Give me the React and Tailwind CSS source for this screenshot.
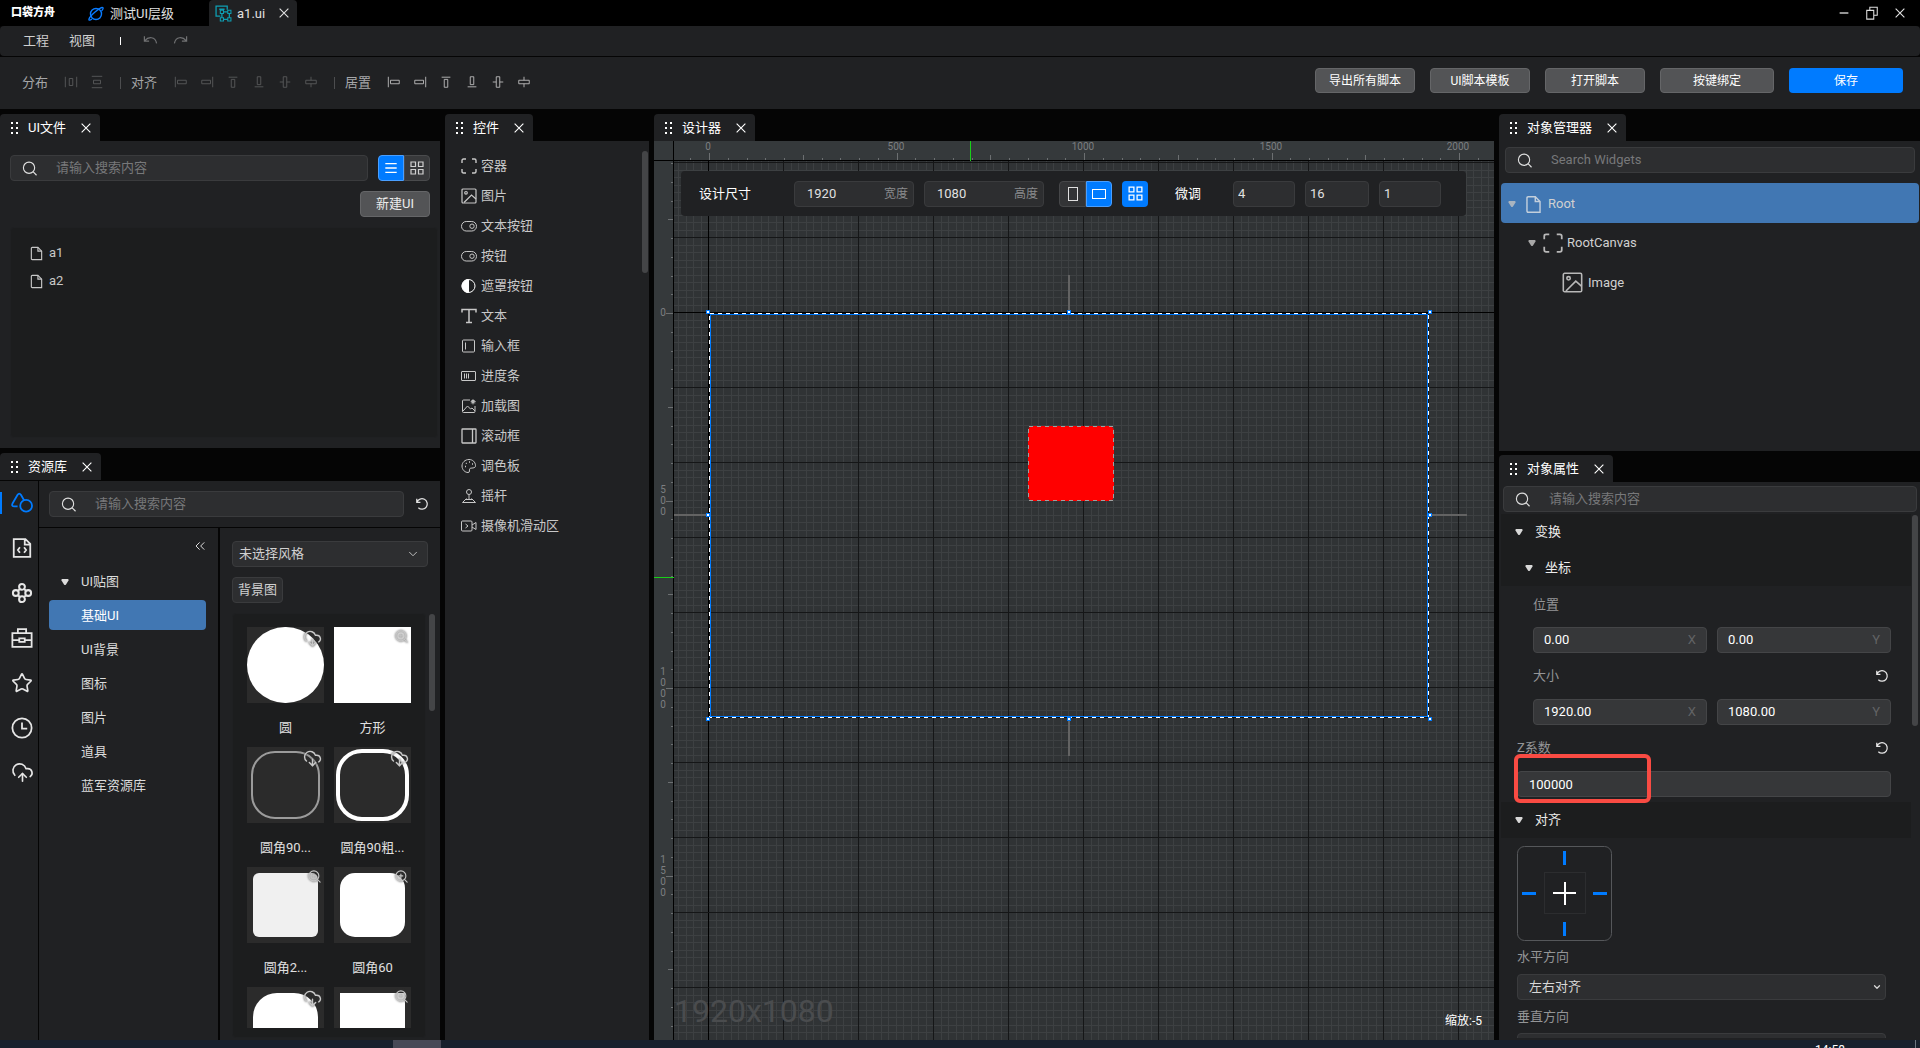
import { ChevronDown, ChevronsLeft, CloudDownload, CloudUpload, Star, ZoomIn } from "lucide-react"

const INPUT = "bg-[#2d2e30] border border-[#3a3b3d] rounded-sm outline-none"

const Svg = ({ size = 16, className = "", children }) => (
  <svg
    width={size}
    height={size}
    viewBox="0 0 16 16"
    fill="none"
    stroke="currentColor"
    strokeWidth="1"
    className={`shrink-0 ${className}`}
    aria-hidden="true"
  >
    {children}
  </svg>
)

const icons = {
  container: <path d="M1 5V2.5Q1 1 2.5 1H5M11 1h2.5Q15 1 15 2.5V5M15 11v2.5q0 1.5-1.5 1.5H11M5 15H2.5Q1 15 1 13.500V11" strokeWidth="1.4" />,
  image: (
    <g strokeWidth="1.2">
      <rect x="1" y="1" width="14" height="14" rx="1" />
      <circle cx="5" cy="4.800" r="1.300" />
      <path d="M3 14.500l7.500-7.500 4.500 4" />
    </g>
  ),
  toggle: (
    <>
      <rect x="0.500" y="3.500" width="15" height="9.500" rx="4.700" />
      <circle cx="11" cy="8.200" r="2.200" />
    </>
  ),
  mask: (
    <>
      <circle cx="7.500" cy="8" r="6.500" />
      <path d="M7.500 1.500a6.500 6.500 0 000 13z" fill="currentColor" />
    </>
  ),
  text: <path d="M1 4.500V1.500h14v3M8 1.500v13M5 14.500h6" strokeWidth="1.500" />,
  input: (
    <>
      <rect x="1.500" y="2" width="12" height="12" rx="1" />
      <path d="M4.500 4.500v7" />
    </>
  ),
  progress: (
    <>
      <rect x="0.500" y="3.500" width="14" height="9" rx="0.500" />
      <path d="M3.500 5.500v5M5.500 5.500v5M7.500 5.500v5" />
    </>
  ),
  loadImage: (
    <>
      <path d="M9 2H2.500Q1.500 2 1.500 3v10.500q0 1 1 1h10.500q1 0 1-1V8" />
      <path d="M2 13l4.500-5 3 3 1.500-1 3 3" />
      <path d="M12 1v5.500M9.500 3.700h5.500M10.300 2l3.500 3.500M13.800 2l-3.500 3.500" strokeWidth="0.700" />
      <circle cx="12" cy="3.700" r="1.300" />
    </>
  ),
  scroll: (
    <g strokeWidth="1.300">
      <rect x="1" y="1" width="14" height="14" rx="0.500" />
      <path d="M11.500 1v14" />
    </g>
  ),
  palette: (
    <>
      <path d="M8 1.500C4 1.500 1 4.500 1 8c0 3.800 3 6.500 6 6.500 2.500 0 .8-2.500 1.800-3.800s5.700.3 5.700-3C14.500 4 11.500 1.500 8 1.500z" />
      <path d="M4 8.500h1M4.800 5.300h1M8 4h1M11 6h1" strokeWidth="1.300" />
    </>
  ),
  stick: (
    <>
      <circle cx="8" cy="4" r="2.500" />
      <path d="M8 6.500v5M5.500 10.500l-4 4h13l-4-4M5 11.500h6" />
    </>
  ),
  camera: (
    <>
      <rect x="0.500" y="3" width="10.500" height="10" rx="1" />
      <path d="M11 7l4-2.500v7L11 9M4.500 6l2.500 2-2.500 2" />
    </>
  ),
  file: (
    <g strokeWidth="1.200">
      <path d="M3.500 1.500h6l4 4v9h-10q-1 0-1-1v-11q0-1 1-1z" />
      <path d="M9.500 1.500v4h4" />
    </g>
  ),
  distH: <path d="M1.500 2v12M14.500 2v12M6 4h4v8H6z" />,
  distV: <path d="M2 1.500h12M2 14.500h12M4 6h8v4H4z" />,
  left: <path d="M1.500 2v12M4 6h10v4H4z" />,
  right: <path d="M14.500 2v12M2 6h10v4H2z" />,
  top: <path d="M3 2.500h10M6 5h4v9H6z" />,
  bottom: <path d="M3 13.500h10M6 2h4v9H6z" />,
  centerH: <path d="M6 2h4v12H6zM2 8h4M10 8h4" />,
  centerV: <path d="M2 6h12v4H2zM8 2v4M8 10v4" />,
  undo: <path d="M1.500 2.500v5h5M2 7q3-3.500 7-3 4.500.500 5.500 6" strokeWidth="1.300" />,
  redo: <path d="M14.500 2.500v5h-5M14 7q-3-3.500-7-3-4.500.500-5.500 6" strokeWidth="1.300" />,
  reset: <path d="M2 2v4.200h4.200M2.300 6a6 6 0 1 1 1.500 6.300" strokeWidth="1.400" />,
  search: (
    <g strokeWidth="1.200">
      <circle cx="7.500" cy="7.200" r="6" />
      <path d="M12 11.500l3.500 3.700" />
    </g>
  ),
  close: <path d="M3 3l10 10M13 3L3 13" strokeWidth="1.300" />,
  grid: <path d="M2 2h4.500v4.500H2zM9.500 2H14v4.500H9.500zM2 9.500h4.500V14H2zM9.500 9.500H14V14H9.500z" strokeWidth="1.200" />,
  list: <path d="M1.500 3h13M1.500 8h13M1.500 13h13" strokeWidth="1.700" />,
}

const Icon = ({ name, size, className }) => (
  <Svg size={size} className={className}>
    {icons[name]}
  </Svg>
)

const Triangle = ({ className = "" }) => (
  <svg width="8" height="8" viewBox="0 0 8 8" className={`shrink-0 ${className}`} aria-hidden="true">
    <path d="M1 1h6q1 .5.500 1.500L5 6.500Q4 7.500 3 6.500L.5 2.500Q0 1.500 1 1z" fill="currentColor" />
  </svg>
)

function PanelTab({ title }) {
  return (
    <div className="flex">
      <div className="flex h-[27px] items-center rounded-t bg-[#202123] pl-[11px] pr-[7px] text-white">
        <svg width="8" height="12" fill="#fff" aria-hidden="true">
          <path d="M0 0h2v2H0zM5 0h2v2H5zM0 5h2v2H0zM5 5h2v2H5zM0 10h2v2H0zM5 10h2v2H5z" />
        </svg>
        <span className="ml-[9px]">{title}</span>
        <button type="button" aria-label={`关闭 ${title}`} className="ml-[13px]">
          <Icon name="close" size={14} />
        </button>
      </div>
    </div>
  )
}

function SearchBox({ placeholder = "请输入搜索内容", className = "" }) {
  return (
    <label className={`flex h-[26px] items-center pl-[11px] ${INPUT} ${className}`}>
      <Icon name="search" size={15} className="text-[#e0e0e0]" />
      <input
        type="text"
        aria-label={placeholder}
        placeholder={placeholder}
        className="ml-[19px] min-w-0 flex-1 bg-transparent outline-none placeholder:text-[#77787a]"
      />
    </label>
  )
}

function TitleBar() {
  return (
    <header className="flex h-[26px] items-center bg-black text-[#e0e0e0]">
      <span className="w-[77px] pl-[11px] text-[11px] font-black text-white">口袋方舟</span>
      <button type="button" className="flex w-[132px] items-center gap-1.5 pt-0.5 pl-[11px]">
        <Svg className="text-[#0a7cff]">
          <circle cx="8" cy="8" r="5.500" strokeWidth="1.400" />
          <path d="M4 13c-2 1.500-3.500 1.500-3 0C2 10 11 2 14 1.500c2-.2 1 2-.5 3.500" strokeWidth="1.300" />
        </Svg>
        测试UI层级
      </button>
      <div className="flex h-full w-[88px] items-center rounded-t bg-[#202123] pl-1.5">
        <Svg size={17} className="text-[#0e9fb4]">
          <path d="M5 10.500H1V1h10.500v3.500M4 4h5M13.500 6.500v7H6.500v-7z" strokeWidth="1.200" />
          <path d="M5 5h3v3H5zM12 5h3v3h-3zM5 12h3v3H5zM12 12h3v3h-3z" fill="#202123" />
        </Svg>
        <span className="ml-[5px] pt-0.5">a1.ui</span>
        <button type="button" aria-label="关闭 a1.ui" className="ml-3">
          <Icon name="close" size={14} />
        </button>
      </div>
      <div className="ml-auto flex items-center gap-[14px] pr-[13px]">
        <button type="button" aria-label="最小化">
          <Svg size={14}>
            <path d="M3 8h10" strokeWidth="1.500" />
          </Svg>
        </button>
        <button type="button" aria-label="还原">
          <Svg size={14}>
            <path d="M2 5h8v10H2zM5.500 5V1.500H14v9h-4" strokeWidth="1.200" />
          </Svg>
        </button>
        <button type="button" aria-label="关闭">
          <Icon name="close" size={14} />
        </button>
      </div>
    </header>
  )
}

const alignNames = ["left", "right", "top", "bottom", "centerH", "centerV"]

const IconRow = ({ names, label, className }) => (
  <div className={`mb-0.5 flex gap-3 ${className}`}>
    {names.map((n) => (
      <button key={n} type="button" aria-label={`${label} ${n}`}>
        <Icon name={n} size={14} />
      </button>
    ))}
  </div>
)

function Toolbar() {
  const btn = "h-[25px] rounded-sm border border-[#656668] bg-[#535456]"
  return (
    <>
      <nav className="flex h-[30px] items-center rounded bg-[#202123] pl-[23px] text-[#d0d0d0]">
        <button type="button">工程</button>
        <button type="button" className="ml-5">视图</button>
        <span className="ml-[25px] h-2 w-px bg-white" />
        <button type="button" aria-label="撤销" className="ml-[22px] text-[#707173]">
          <Icon name="undo" size={15} />
        </button>
        <button type="button" aria-label="重做" className="ml-[15px] text-[#707173]">
          <Icon name="redo" size={15} />
        </button>
      </nav>
      <div className="mt-px flex h-[52px] items-center bg-[#202123] pb-px pl-[22px] pr-[17px] text-[#a5a6a8]">
        <span>分布</span>
        <IconRow names={["distH", "distV"]} label="分布" className="ml-4 text-[#5a5b5d]" />
        <span className="ml-4 h-3 w-px bg-[#4c4d4f]" />
        <span className="ml-[10px]">对齐</span>
        <IconRow names={alignNames} label="对齐" className="ml-[17px] text-[#5a5b5d]" />
        <span className="ml-4 h-3 w-px bg-[#4c4d4f]" />
        <span className="ml-[10px]">居置</span>
        <IconRow names={alignNames} label="居置" className="ml-4 text-[#c0c0c0]" />
        <div className="mb-1 ml-auto flex gap-[15px] text-xs text-white">
          <button type="button" className={`w-[100px] ${btn}`}>导出所有脚本</button>
          <button type="button" className={`w-[100px] ${btn}`}>UI脚本模板</button>
          <button type="button" className={`w-[100px] ${btn}`}>打开脚本</button>
          <button type="button" className={`w-[114px] ${btn}`}>按键绑定</button>
          <button type="button" className="h-[25px] w-[114px] rounded-sm bg-[#007bff]">保存</button>
        </div>
      </div>
    </>
  )
}

function FilesPanel() {
  return (
    <section>
      <PanelTab title="UI文件" />
      <div className="flex h-[307px] flex-col bg-[#202123] pt-[14px] pr-0.5 pb-[10px] pl-[10px]">
        <div className="flex pr-2">
          <SearchBox className="flex-1" />
          <div className="ml-[10px] flex">
            <button type="button" aria-label="列表" className="flex size-[26px] items-center justify-center rounded-l-sm border border-[#4a9fff] bg-[#007bff] text-white">
              <Icon name="list" size={14} />
            </button>
            <button type="button" aria-label="网格" className="flex size-[26px] items-center justify-center rounded-r-sm border border-[#4a4b4d] bg-[#38393b] text-[#d0d0d0]">
              <Icon name="grid" />
            </button>
          </div>
        </div>
        <button type="button" className="mt-[10px] mr-2 h-[26px] w-[70px] self-end rounded-sm border border-[#656668] bg-[#535456] text-[#ececec]">
          新建UI
        </button>
        <ul className="mt-[10px] flex-1 rounded border border-[#1f2022] bg-[#1c1d1e] px-[18px] py-[11px]">
          {["a1", "a2"].map((f) => (
            <li key={f} className="flex h-7 items-center gap-[5px] text-[#c8c8c8]">
              <Icon name="file" size={15} />
              {f}
            </li>
          ))}
        </ul>
      </div>
    </section>
  )
}

const sideTools = [
  ["图形", <path key="p" d="M4.800 10.500H2.500Q0 10.500 1.200 8.200L4.800 2Q6 .3 7.200 2l2.300 4M15.300 10a4.300 4.300 0 1 1-8.600 0a4.300 4.300 0 1 1 8.600 0z" />],
  ["脚本", <path key="p" d="M2 1.500h8.500l3.500 3.500v9.500H2zM10 1.500v4h4M6.500 7.500L5 9.500l1.500 2M9.500 7.500l1.500 2-1.500 2" />],
  ["组件", <path key="p" strokeWidth="1.500" d="M10.100 3.500a2.100 2.100 0 1 1-4.200 0a2.100 2.100 0 1 1 4.200 0zM10.100 12.500a2.100 2.100 0 1 1-4.200 0a2.100 2.100 0 1 1 4.200 0zM5.600 8a2.100 2.100 0 1 1-4.200 0a2.100 2.100 0 1 1 4.200 0zM14.600 8a2.100 2.100 0 1 1-4.200 0a2.100 2.100 0 1 1 4.200 0zM5.500 6l1-1M9.500 5l1 1M10.500 10l-1 1M6.500 11l-1-1" />],
  ["工具箱", <path key="p" d="M1 4.500h14v10H1zM5 4.500V1.500h6v3M1 9.500h5M10 9.500h5M6 8.200h4v2.600H6z" />],
  ["收藏", null],
  ["最近", <path key="p" d="M15 8A7 7 0 1 1 1 8a7 7 0 1 1 14 0zM8 4v4.500h3.800" />],
  ["上传", null],
]

const categories = ["基础UI", "UI背景", "图标", "图片", "道具", "蓝军资源库"]

const assets = [
  { name: "圆", badge: "cloud", shape: "inset-0 rounded-full bg-white" },
  { name: "方形", badge: "zoom", shape: "inset-0 bg-white" },
  { name: "圆角90...", badge: "cloud", shape: "inset-1 rounded-[24px] border-2 border-[#9b9b9b]" },
  { name: "圆角90粗...", badge: "cloud", shape: "inset-0.5 rounded-[26px] border-4 border-white" },
  { name: "圆角2...", badge: "zoom", shape: "inset-1.5 rounded-md bg-[#f0f0f0]" },
  { name: "圆角60", badge: "zoom", shape: "inset-1.5 rounded-[15px] bg-white" },
  { badge: "cloud", shape: "inset-1.5 rounded-[24px] bg-white" },
  { badge: "zoom", shape: "inset-1.5 bg-white" },
]

function Asset({ name, badge, shape }) {
  const Badge = badge === "cloud" ? CloudDownload : ZoomIn
  return (
    <li className="h-[120px] text-center text-[#e0e0e0]">
      <div className="relative h-[76px] bg-[#2b2b2b]">
        <div className={`absolute ${shape}`} />
        <Badge
          className="absolute top-0.5 right-0.5 text-[#c8c8c8] [filter:drop-shadow(0_0_1px_#333)]"
          size={badge === "cloud" ? 19 : 15}
          strokeWidth={1.8}
        />
      </div>
      {name && <div className="mt-[15px] h-5 leading-5">{name}</div>}
    </li>
  )
}

function LibraryPanel() {
  return (
    <section className="mt-[5px] flex min-h-0 flex-1 flex-col">
      <PanelTab title="资源库" />
      <div className="mt-px flex min-h-0 flex-1 gap-px">
        <div className="flex w-[38px] flex-col bg-[#202123]">
          {sideTools.map(([label, shape], i) => (
            <button
              key={label}
              type="button"
              aria-label={label}
              className={`relative flex h-[45px] items-center justify-center pb-0.5 pl-1.5 ${i === 0 ? "text-[#007bff]" : "text-[#e6e6e6]"}`}
            >
              {i === 0 && <span className="absolute top-[11px] left-0 h-[22px] w-0.5 bg-[#007bff]" />}
              {shape && (
                <Svg size={22}>
                  <g strokeWidth="1.300">{shape}</g>
                </Svg>
              )}
              {label === "收藏" && <Star size={22} strokeWidth={1.8} />}
              {label === "上传" && <CloudUpload size={23} strokeWidth={1.7} />}
            </button>
          ))}
        </div>
        <div className="flex min-w-0 flex-1 flex-col gap-px">
          <div className="flex h-[46px] items-center gap-[11px] bg-[#202123] pr-[11px] pl-[10px]">
            <SearchBox className="flex-1" />
            <button type="button" aria-label="刷新" className="text-[#e0e0e0]">
              <Icon name="reset" size={14} />
            </button>
          </div>
          <div className="flex min-h-0 flex-1 gap-0.5">
            <div className="w-[179px] bg-[#202123] px-[10px] pt-[9px] text-[#dcdcdc]">
              <div className="flex h-[18px] justify-end">
                <button type="button" aria-label="收起">
                  <ChevronsLeft size={16} strokeWidth={1.5} />
                </button>
              </div>
              <div className="mt-[10px] mb-px flex h-[34px] items-center pl-3">
                <Triangle />
                <span className="ml-3">UI贴图</span>
              </div>
              {categories.map((c, i) => (
                <button
                  key={c}
                  type="button"
                  className={`mb-1 block h-[30px] w-[157px] rounded pt-0.5 pl-8 text-left ${i === 0 ? "bg-[#4177b3] text-white" : ""}`}
                >
                  {c}
                </button>
              ))}
            </div>
            <div className="flex min-w-0 flex-1 flex-col bg-[#202123] pt-[13px] pr-1 pb-0.5 pl-3">
              <div className="relative mr-2 text-[#d0d0d0]">
                <select aria-label="风格" className={`h-[26px] w-full appearance-none px-1.5 ${INPUT}`}>
                  <option>未选择风格</option>
                </select>
                <ChevronDown size={14} strokeWidth={1.5} className="pointer-events-none absolute top-1.5 right-2" />
              </div>
              <button type="button" className={`mt-[10px] h-[26px] w-[51px] text-[#d0d0d0] ${INPUT}`}>
                背景图
              </button>
              <div className="mt-[10px] flex min-h-0 flex-1 gap-[3px]">
                <div className="min-h-0 w-[194px] rounded border border-[#1f2022] bg-[#1c1d1e] px-[14px] pt-[13px] pb-[9px]">
                  <ul className="grid h-full grid-cols-2 gap-x-[10px] overflow-hidden">
                    {assets.map((a, i) => (
                      <Asset key={i} {...a} />
                    ))}
                  </ul>
                </div>
                <div className="mt-px h-[97px] w-1.5 rounded-full bg-[#444547]" />
              </div>
            </div>
          </div>
        </div>
      </div>
    </section>
  )
}

const widgets = [
  ["container", "容器"],
  ["image", "图片"],
  ["toggle", "文本按钮"],
  ["toggle", "按钮"],
  ["mask", "遮罩按钮"],
  ["text", "文本"],
  ["input", "输入框"],
  ["progress", "进度条"],
  ["loadImage", "加载图"],
  ["scroll", "滚动框"],
  ["palette", "调色板"],
  ["stick", "摇杆"],
  ["camera", "摄像机滑动区"],
]

function WidgetsPanel() {
  return (
    <section className="flex w-[204px] shrink-0 flex-col">
      <PanelTab title="控件" />
      <div className="flex flex-1 justify-between bg-[#202123] pt-[10px] pr-px pl-4 text-[#c8c8c8]">
        <ul>
          {widgets.map(([icon, label]) => (
            <li key={label} className="flex h-[30px] items-center gap-1">
              <Icon name={icon} className={icon === "mask" ? "text-white" : ""} />
              {label}
            </li>
          ))}
        </ul>
        <div className="h-[122px] w-1.5 rounded-full bg-[#444547]" />
      </div>
    </section>
  )
}

// zoom -5: 500 design units take 187.5 screen px
const RULER = 20
const ORIGIN = { x: 54, y: 171 }
const range = (from, to) => Array.from({ length: to - from }, (_, i) => i + from)

function Canvas() {
  const sel = { x: 55, y: 172, w: 720, h: 405 }
  const midX = sel.x + sel.w / 2
  const midY = sel.y + 202
  const handles = [
    [sel.x - 1, sel.y - 1],
    [midX, sel.y - 1],
    [sel.x + sel.w + 1, sel.y - 1],
    [sel.x - 1, midY],
    [sel.x + sel.w + 1, midY],
    [sel.x - 1, sel.y + sel.h + 1],
    [midX, sel.y + sel.h + 1],
    [sel.x + sel.w + 1, sel.y + sel.h + 1],
  ]
  const lineAt = (origin, i) => origin + Math.round(i * 7.5)
  const minor = range(-22, 400).filter((i) => i % 10 !== 0)
  const major = range(-2, 40)
  const ticks = range(-9, 160)
  const tickLen = (i) => (i % 10 === 0 ? 7 : i % 5 === 0 ? 5 : 2)

  return (
    <svg className="absolute inset-0 h-full w-full" shapeRendering="crispEdges" role="img" aria-label="画布">
      <rect width="100%" height="100%" fill="#303335" />
      <g fill="#3d4042">
        {minor.map((i) => (
          <g key={i}>
            <rect x={lineAt(ORIGIN.x, i)} width="1" height="100%" />
            <rect y={lineAt(ORIGIN.y, i)} width="100%" height="1" />
          </g>
        ))}
      </g>
      {major.map((i) => (
        <g key={i} fill={i === 0 ? "#000" : "#151617"}>
          <rect x={ORIGIN.x + i * 75} width="1" height="100%" />
          <rect y={ORIGIN.y + i * 75} width="100%" height="1" />
        </g>
      ))}

      <g fill="#636363">
        <rect x={midX - 1} y={sel.y - 38} width="2" height="37" />
        <rect x={midX - 1} y={sel.y + sel.h + 1} width="2" height="37" />
        <rect x={RULER} y={midY - 1} width="34" height="2" />
        <rect x={sel.x + sel.w + 1} y={midY - 1} width="37" height="2" />
      </g>
      <rect x={sel.x + 1.5} y={sel.y + 1.5} width={sel.w - 3} height={sel.h - 3} fill="none" stroke="#007bff" />
      <rect x={sel.x + 0.5} y={sel.y + 0.5} width={sel.w - 1} height={sel.h - 1} fill="none" stroke="#111" />
      <rect x={sel.x + 0.5} y={sel.y + 0.5} width={sel.w - 1} height={sel.h - 1} fill="none" stroke="#fff" strokeDasharray="4 4" />
      {handles.map(([x, y]) => (
        <g key={`${x}-${y}`}>
          <rect x={x - 2} y={y - 2} width="4" height="4" fill="#007bff" />
          <rect x={x - 1} y={y - 1} width="2" height="2" fill="#fff" />
        </g>
      ))}

      <rect x="374" y="285" width="86" height="75" rx="5" fill="#f00" shapeRendering="auto" />
      <rect x="374.500" y="285.500" width="85" height="74" fill="none" stroke="#a0a0a0" strokeDasharray="4 4" />

      {/* rulers */}
      <rect width="100%" height={RULER} fill="#35393b" />
      <rect width={RULER} height="100%" fill="#35393b" />
      <rect x="0" y="19" width="100%" height="1" fill="#000" />
      <rect x="19" y="0" width="1" height="100%" fill="#000" />
      <g fill="#6c6f71">
        {ticks.map((i) => {
          const d = Math.round(i * 18.75)
          const len = tickLen(i)
          return (
            <g key={i}>
              {d > -35 && <rect x={ORIGIN.x + 1 + d} y={19 - len} width="1" height={len} />}
              {d > -152 && <rect x={19 - len} y={ORIGIN.y + 1 + d} width={len} height="1" />}
            </g>
          )
        })}
      </g>
      <g fill="#7c7f81" fontSize="10" textAnchor="middle">
        {[0, 500, 1000, 1500, 2000].map((n) => {
          const d = Math.round((n * 187.5) / 500)
          const digits = n < 2000 ? String(n).split("") : []
          return (
            <g key={n}>
              <text x={ORIGIN.x + d} y="9">
                {n}
              </text>
              {digits.map((c, i) => (
                <text key={i} x="9" y={ORIGIN.y + 4 + d + Math.round((i - (digits.length - 1) / 2) * 11)}>
                  {c}
                </text>
              ))}
            </g>
          )
        })}
      </g>
      <rect x="316" y="0" width="1" height={RULER} fill="#18d018" />
      <rect x="0" y="436" width={RULER} height="1" fill="#18d018" />
    </svg>
  )
}

const SizeInput = ({ id, label, value }) => (
  <div className={`flex h-[26px] w-[120px] items-center pr-[5px] pl-[12px] text-[#e0e0e0] ${INPUT}`}>
    <input id={id} type="text" defaultValue={value} className="w-16 flex-1 bg-transparent outline-none" />
    <label htmlFor={id} className="text-xs text-[#8a8b8d]">
      {label}
    </label>
  </div>
)

function DesignerPanel() {
  const step = `h-[26px] pl-1 text-[#e0e0e0] ${INPUT}`
  return (
    <section className="flex min-w-0 flex-1 flex-col">
      <PanelTab title="设计器" />
      <div className="relative flex flex-1 flex-col overflow-hidden">
        <Canvas />
        <div className="relative mt-[30px] mr-7 ml-[27px] flex h-[45px] items-center rounded bg-[#202123] pl-[18px] text-white">
          <span className="w-[95px]">设计尺寸</span>
          <SizeInput id="design-width" label="宽度" value="1920" />
          <div className="w-[10px]" />
          <SizeInput id="design-height" label="高度" value="1080" />
          <div className="ml-[15px] flex">
            <button type="button" aria-label="竖屏" className="flex h-[26px] w-[27px] items-center justify-center rounded-l border border-[#464749] bg-[#333436]">
              <span className="h-[14px] w-[10px] border border-[#e0e0e0]" />
            </button>
            <button type="button" aria-label="横屏" className="flex size-[26px] items-center justify-center rounded-r border border-[#4a9fff] bg-[#007bff]">
              <span className="h-[10px] w-[14px] border border-white" />
            </button>
          </div>
          <button type="button" aria-label="网格吸附" className="ml-[10px] flex size-[26px] items-center justify-center rounded bg-[#007bff]">
            <Icon name="grid" size={17} />
          </button>
          <span className="ml-[27px] w-[58px]">微调</span>
          <div className="flex gap-[10px]">
            <input type="text" aria-label="微调 1" defaultValue="4" className={`w-[62px] ${step}`} />
            <input type="text" aria-label="微调 2" defaultValue="16" className={`w-16 ${step}`} />
            <input type="text" aria-label="微调 3" defaultValue="1" className={`w-[62px] ${step}`} />
          </div>
        </div>
        <div className="relative mt-auto flex items-end justify-between pr-3 pb-[9px] pl-5">
          <span className="text-[32px] leading-10 text-[#4a4c4e]">1920x1080</span>
          <span className="text-xs leading-5 text-white">缩放:-5</span>
        </div>
      </div>
    </section>
  )
}

function HierarchyPanel() {
  return (
    <section>
      <PanelTab title="对象管理器" />
      <div className="h-[310px] bg-[#202123] pt-1.5 pr-px pl-0.5 text-[#d0d0d0]">
        <SearchBox placeholder="Search Widgets" className="mr-1 ml-1" />
        <ul className="mt-[10px]">
          <li className="flex h-10 items-center rounded bg-[#4177b3] pt-0.5 pl-[7px]">
            <Triangle className="text-[#a9b4c0]" />
            <Icon name="file" size={19} className="ml-2 text-[#c3cfdc]" />
            <span className="ml-[5px]">Root</span>
          </li>
          <li className="flex h-[39px] items-center pt-px pl-[27px]">
            <Triangle className="text-[#a8a8a8]" />
            <Icon name="container" size={20} className="ml-[7px] text-[#b8b8b8]" />
            <span className="ml-1">RootCanvas</span>
          </li>
          <li className="flex h-[39px] items-center pt-0.5 pl-[61px]">
            <Icon name="image" size={21} className="text-[#b8b8b8]" />
            <span className="ml-[5px]">Image</span>
          </li>
        </ul>
      </div>
    </section>
  )
}

const SectionHead = ({ title, nested }) => (
  <div className={`flex h-9 items-center bg-[#1c1d1e] text-[#ececec] ${nested ? "pl-6" : "pl-[14px]"}`}>
    <Triangle className="text-[#d8d8d8]" />
    <span className="ml-3">{title}</span>
  </div>
)

const FieldLabel = ({ title, reset, htmlFor }) => (
  <div className="flex h-[26px] items-center justify-between text-[#949597]">
    <label htmlFor={htmlFor}>{title}</label>
    {reset && (
      <button type="button" aria-label={`重置 ${title}`} className="mr-[2px] text-[#e6e6e6]">
        <Icon name="reset" size={14} />
      </button>
    )}
  </div>
)

const FIELD = "h-[26px] rounded-sm border border-[#444547] bg-[#363739] text-white outline-none"

function Vector({ name, x, y }) {
  return (
    <div className="flex gap-[10px]">
      {[["X", x], ["Y", y]].map(([axis, value]) => (
        <label key={axis} className={`flex min-w-0 flex-1 items-center px-[10px] ${FIELD}`}>
          <input type="text" aria-label={`${name} ${axis}`} defaultValue={value} className="min-w-0 flex-1 bg-transparent outline-none" />
          <span className="text-[#626365]">{axis}</span>
        </label>
      ))}
    </div>
  )
}

const DropDown = ({ id, value }) => (
  <div className="relative mr-[5px] text-[#d8d8d8]">
    <select id={id} className={`h-[26px] w-full appearance-none px-[11px] ${INPUT}`}>
      <option>{value}</option>
    </select>
    <ChevronDown size={10} strokeWidth={3} className="pointer-events-none absolute top-2 right-1" />
  </div>
)

function PropertiesPanel() {
  return (
    <section className="mt-1 flex min-h-0 flex-1 flex-col">
      <PanelTab title="对象属性" />
      <div className="flex min-h-0 flex-1 flex-col bg-[#202123] pt-1 pr-0.5 pb-0.5 pl-0.5">
        <SearchBox className="mr-px ml-0.5 shrink-0" />
        <div className="mt-0.5 flex min-h-0 flex-1 gap-px">
          <div className="min-w-0 flex-1 overflow-hidden">
            <SectionHead title="变换" />
            <SectionHead title="坐标" nested />
            <div className="pt-1.5 pr-5 pl-8">
              <FieldLabel title="位置" />
              <div className="mt-[9px]">
                <Vector name="位置" x="0.00" y="0.00" />
              </div>
              <div className="mt-[10px] mb-[10px]">
                <FieldLabel title="大小" reset />
              </div>
              <Vector name="大小" x="1920.00" y="1080.00" />
            </div>
            <div className="pt-[10px] pr-5 pb-[5px] pl-4">
              <FieldLabel title="Z系数" reset htmlFor="z-order" />
              <div className="relative mt-[10px]">
                <input id="z-order" type="text" defaultValue="100000" className={`w-full px-[11px] ${FIELD}`} />
                <div className="pointer-events-none absolute -top-[17px] -left-[3px] h-[49px] w-[137px] rounded-md border-4 border-[#f94b43]" />
              </div>
            </div>
            <SectionHead title="对齐" />
            <div className="pt-2 pr-5 pl-4">
              <svg width="95" height="95" fill="none" role="img" aria-label="锚点" shapeRendering="crispEdges">
                <rect x="0.500" y="0.500" width="94" height="94" rx="7" stroke="#55575a" shapeRendering="auto" />
                <rect x="27.500" y="26.500" width="41" height="41" stroke="#2c2d2f" />
                <path d="M46 5h3v14h-3zM46 76h3v14h-3zM5 46h14v3H5zM76 46h14v3H76z" fill="#007bff" />
                <path d="M36 46h23v2H36zM47 36h2v23h-2z" fill="#fff" />
              </svg>
              <div className="mt-[3px]">
                <FieldLabel title="水平方向" htmlFor="align-h" />
              </div>
              <div className="mt-1 mb-1">
                <DropDown id="align-h" value="左右对齐" />
              </div>
              <FieldLabel title="垂直方向" htmlFor="align-v" />
              <div className="mt-[3px]">
                <DropDown id="align-v" value="" />
              </div>
            </div>
          </div>
          <div className="mt-px h-[211px] w-1.5 rounded-full bg-[#444547]" />
        </div>
      </div>
    </section>
  )
}

export default function App() {
  return (
    <div className="flex h-screen flex-col overflow-hidden bg-[#050505] font-[Roboto,'Noto_Sans_CJK_SC',sans-serif] text-[13px] leading-5">
      <TitleBar />
      <Toolbar />
      <main className="mt-[5px] flex min-h-0 flex-1 gap-[5px]">
        <div className="flex w-[440px] shrink-0 flex-col">
          <FilesPanel />
          <LibraryPanel />
        </div>
        <WidgetsPanel />
        <DesignerPanel />
        <div className="flex w-[421px] shrink-0 flex-col">
          <HierarchyPanel />
          <PropertiesPanel />
        </div>
      </main>
      <footer className="flex h-2 items-start overflow-hidden bg-[#18212d]">
        <div className="ml-[393px] h-full w-12 bg-[#474956]" />
        <span className="mt-1 mr-[70px] ml-auto text-xs leading-3 text-white">14:58</span>
        <div className="mr-1 h-full w-px bg-[#6d7680]" />
      </footer>
    </div>
  )
}
